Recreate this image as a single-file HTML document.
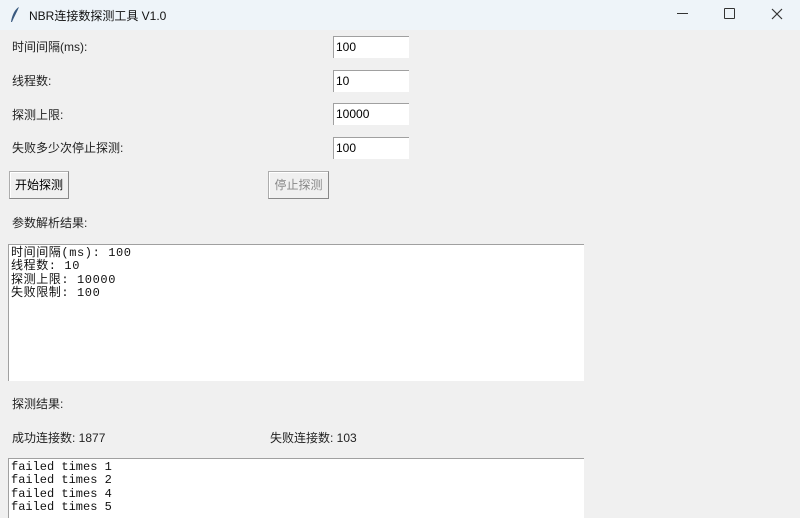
<!DOCTYPE html>
<html><head><meta charset="utf-8"><style>
*{margin:0;padding:0;box-sizing:border-box}
body{width:800px;height:512px;overflow:hidden;background:#f0f0f0;font-family:"Liberation Sans","Noto Sans CJK SC",sans-serif;font-size:12px;color:#000;position:relative}
.tb{position:absolute;left:0;top:0;width:800px;height:30px;background:#eef4f9}
.abs{position:absolute;white-space:nowrap}
.lbl{font-size:12px;color:#222}
.inp{position:absolute;left:333px;width:76px;height:22px;background:#fff;border-top:1px solid #a0a0a0;border-left:1px solid #a0a0a0;padding:2px 2px;font-size:12px;line-height:17px}
.btn{position:absolute;height:28px;width:60px;text-align:center;background:#f0f0f0;border:1px solid #adadad;border-right-color:#888;border-bottom-color:#888;box-shadow:inset 1px 1px 0 #fff;font-size:12px;line-height:26px}
.txt{position:absolute;left:8px;width:576px;background:#fff;border-top:1px solid #a0a0a0;border-left:1px solid #a0a0a0;font-family:"Liberation Mono","Noto Sans CJK SC",monospace;font-size:12px;line-height:13.3px;padding:2px 2px;color:#111}
</style></head><body>
<div class="tb"></div>
<svg class="abs" style="left:9px;top:6px" width="12" height="18" viewBox="0 0 12 18"><path d="M10 1C6 3 3 9 2 16L3 16C5 11 8 6 10 1Z" fill="#3a5a80"/></svg>
<div class="abs" style="left:29px;top:7px;font-size:12px;color:#111">NBR连接数探测工具 V1.0</div>
<div class="abs" style="left:677px;top:13px;width:11px;height:1px;background:#333"></div>
<div class="abs" style="left:724px;top:8px;width:11px;height:11px;border:1px solid #333;border-radius:1px"></div>
<svg class="abs" style="left:771px;top:8px" width="12" height="12"><path d="M1 1L11 11M11 1L1 11" stroke="#333" stroke-width="1.2"/></svg>

<div class="abs lbl" style="left:12px;top:38px">时间间隔(ms):</div>
<div class="abs lbl" style="left:12px;top:72px">线程数:</div>
<div class="abs lbl" style="left:12px;top:106px">探测上限:</div>
<div class="abs lbl" style="left:12px;top:139px">失败多少次停止探测:</div>
<div class="inp" style="top:36px">100</div>
<div class="inp" style="top:70px">10</div>
<div class="inp" style="top:103px">10000</div>
<div class="inp" style="top:137px">100</div>
<div class="btn" style="left:9px;top:171px">开始探测</div>
<div class="btn" style="left:268px;top:171px;width:61px;color:#888">停止探测</div>
<div class="abs lbl" style="left:12px;top:214px">参数解析结果:</div>
<div class="txt" style="top:244px;height:137px;letter-spacing:0.6px">时间间隔(ms): 100<br>线程数: 10<br>探测上限: 10000<br>失败限制: 100</div>
<div class="abs lbl" style="left:12px;top:395px">探测结果:</div>
<div class="abs lbl" style="left:12px;top:429px">成功连接数: 1877</div>
<div class="abs lbl" style="left:270px;top:429px">失败连接数: 103</div>
<div class="txt" style="top:458px;height:60px">failed times 1<br>failed times 2<br>failed times 4<br>failed times 5</div>
</body></html>
